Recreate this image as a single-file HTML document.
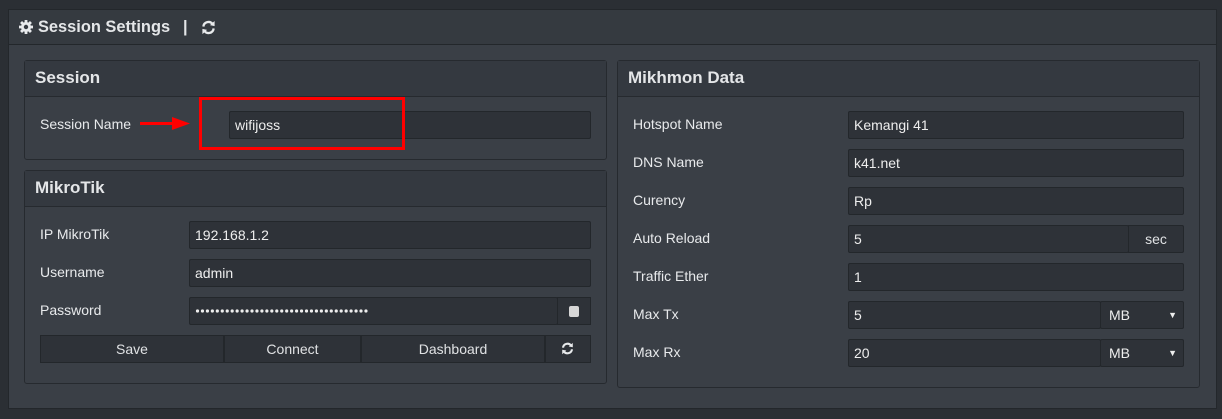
<!DOCTYPE html>
<html><head><style>
body{margin:0;width:1222px;height:419px;background:#2b2f34;font-family:"Liberation Sans",sans-serif;color:#e4e6e8;position:relative;overflow:hidden}
.a{position:absolute;box-sizing:border-box}
.card{left:8px;top:9px;width:1209px;height:400px;background:#3a3f46;border:1px solid #23272b}
.ch{left:8px;top:9px;width:1209px;height:36px;background:#353a40;border:1px solid #23272b}
.p{background:#3a3f46;border:1px solid #262a2f;border-radius:3px}
.ph{background:#343940;border-bottom:1px solid #262a2f;font-weight:bold;font-size:17px;line-height:34px;padding-left:10px;height:36px;box-sizing:border-box}
.l{font-size:14px;color:#e8eaec}
.i{background:#2e3238;border:1px solid #23272b;border-radius:2px;height:28px;font-size:14px;line-height:26px;padding-left:5px;color:#eee}
.b{background:#2e3238;border:1px solid #23272b;height:28px;font-size:14px;line-height:26px;text-align:center;color:#e0e2e4}
</style></head><body>
<div class="a card"></div>
<div class="a ch"></div>
<svg class="a" style="left:19px;top:20px" width="14" height="14" viewBox="0 0 14 14"><g fill="#e8eaec"><circle cx="7" cy="7" r="5"/><rect x="5.6" y="0" width="2.8" height="14"/><rect x="0" y="5.6" width="14" height="2.8"/><rect x="5.6" y="0" width="2.8" height="14" transform="rotate(45 7 7)"/><rect x="5.6" y="0" width="2.8" height="14" transform="rotate(-45 7 7)"/></g><circle cx="7" cy="7" r="2.2" fill="#353a40"/></svg>
<div class="a" style="left:38px;top:18px;font-weight:bold;font-size:16.4px">Session Settings</div>
<div class="a" style="left:183px;top:18px;font-weight:bold;font-size:16.4px">|</div>
<svg class="a" style="left:201px;top:20px" width="15" height="15" viewBox="0 0 16 16"><path d="M2.5 7 A5.5 5.5 0 0 1 12.5 4.5" fill="none" stroke="#e8eaec" stroke-width="2.4"/><polygon points="9.5,5.5 14.5,6.5 14.5,1" fill="#e8eaec"/><path d="M13.5 9 A5.5 5.5 0 0 1 3.5 11.5" fill="none" stroke="#e8eaec" stroke-width="2.4"/><polygon points="6.5,10.5 1.5,9.5 1.5,15" fill="#e8eaec"/></svg>

<div class="a p" style="left:24px;top:60px;width:583px;height:100px"><div class="ph">Session</div></div>
<div class="a l" style="left:40px;top:116px">Session Name</div>
<svg class="a" style="left:139px;top:116px" width="52" height="15"><line x1="1" y1="7.5" x2="36" y2="7.5" stroke="#f00" stroke-width="3"/><polygon points="33,1 51,7.5 33,14" fill="#f00"/></svg>
<div class="a i" style="left:229px;top:111px;width:362px">wifijoss</div>
<div class="a" style="left:199px;top:97px;width:206px;height:53px;border:3px solid #f00"></div>

<div class="a p" style="left:24px;top:170px;width:583px;height:214px"><div class="ph">MikroTik</div></div>
<div class="a l" style="left:40px;top:226px">IP MikroTik</div>
<div class="a l" style="left:40px;top:264px">Username</div>
<div class="a l" style="left:40px;top:302px">Password</div>
<div class="a i" style="left:189px;top:221px;width:402px">192.168.1.2</div>
<div class="a i" style="left:189px;top:259px;width:402px">admin</div>
<div class="a i" style="left:189px;top:297px;width:369px"></div>
<svg class="a" style="left:190px;top:306px" width="200" height="10">
<line x1="7.5" y1="5" x2="176" y2="5" stroke="#eee" stroke-width="3.2" stroke-linecap="round" stroke-dasharray="0 4.955"/></svg>
<div class="a b" style="left:557px;top:297px;width:34px"><span style="display:inline-block;width:10px;height:11px;background:#d6d6d6;border-radius:2px;margin-top:8px"></span></div>
<div class="a b" style="left:40px;top:335px;width:184px">Save</div>
<div class="a b" style="left:224px;top:335px;width:137px">Connect</div>
<div class="a b" style="left:361px;top:335px;width:184px">Dashboard</div>
<div class="a b" style="left:545px;top:335px;width:46px"></div>
<svg class="a" style="left:561px;top:342px" width="13" height="13" viewBox="0 0 16 16"><path d="M2.5 7 A5.5 5.5 0 0 1 12.5 4.5" fill="none" stroke="#e8eaec" stroke-width="2.6"/><polygon points="9.5,5.5 14.5,6.5 14.5,1" fill="#e8eaec"/><path d="M13.5 9 A5.5 5.5 0 0 1 3.5 11.5" fill="none" stroke="#e8eaec" stroke-width="2.6"/><polygon points="6.5,10.5 1.5,9.5 1.5,15" fill="#e8eaec"/></svg>

<div class="a p" style="left:617px;top:60px;width:583px;height:328px"><div class="ph">Mikhmon Data</div></div>
<div class="a l" style="left:633px;top:116px">Hotspot Name</div>
<div class="a l" style="left:633px;top:154px">DNS Name</div>
<div class="a l" style="left:633px;top:192px">Curency</div>
<div class="a l" style="left:633px;top:230px">Auto Reload</div>
<div class="a l" style="left:633px;top:268px">Traffic Ether</div>
<div class="a l" style="left:633px;top:306px">Max Tx</div>
<div class="a l" style="left:633px;top:344px">Max Rx</div>
<div class="a i" style="left:848px;top:111px;width:336px">Kemangi 41</div>
<div class="a i" style="left:848px;top:149px;width:336px">k41.net</div>
<div class="a i" style="left:848px;top:187px;width:336px">Rp</div>
<div class="a i" style="left:848px;top:225px;width:281px">5</div>
<div class="a b" style="left:1128px;top:225px;width:56px;border-radius:0 2px 2px 0">sec</div>
<div class="a i" style="left:848px;top:263px;width:336px">1</div>
<div class="a i" style="left:848px;top:301px;width:253px">5</div>
<div class="a i" style="left:1100px;top:301px;width:84px;padding-left:8px">MB<span style="position:absolute;right:6px;font-size:9px">&#9660;</span></div>
<div class="a i" style="left:848px;top:339px;width:253px">20</div>
<div class="a i" style="left:1100px;top:339px;width:84px;padding-left:8px">MB<span style="position:absolute;right:6px;font-size:9px">&#9660;</span></div>
</body></html>
